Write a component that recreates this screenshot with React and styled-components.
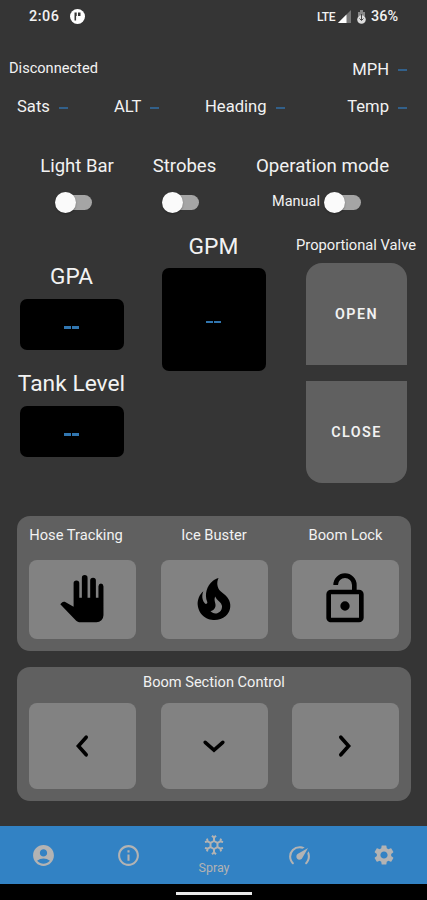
import React, { useState } from "react";
import styled, { createGlobalStyle } from "styled-components";
import { MdAccountCircle, MdInfoOutline, MdSettings } from "react-icons/md";

const GlobalStyle = createGlobalStyle`
  * {
    box-sizing: border-box;
  }
  body {
    margin: 0;
    background: #000;
    font-family: Roboto, sans-serif;
    color: #f2f2f2;
  }
  button {
    font-family: inherit;
    color: inherit;
    border: 0;
    padding: 0;
    cursor: pointer;
  }
`;

const Screen = styled.div`
  width: 427px;
  height: 900px;
  background: #353535;
  display: flex;
  flex-direction: column;
  overflow: hidden;
`;

const StatusBar = styled.header`
  height: 33px;
  padding: 0 29px;
  display: flex;
  justify-content: space-between;
  align-items: center;
  flex-shrink: 0;
`;

const StatusGroup = styled.div`
  display: flex;
  align-items: center;
  gap: ${({ gap }) => gap};
`;

const Text = styled.span`
  font-size: ${({ size }) => size}px;
  font-weight: ${({ weight }) => weight || 400};
  letter-spacing: ${({ spacing }) => spacing || 0}px;
  line-height: 20px;
  white-space: nowrap;
`;

const ConnectionRow = styled.div`
  height: 36px;
  margin-top: 17px;
  padding: 0 20px 0 9px;
  display: flex;
  justify-content: space-between;
  align-items: center;
`;

const ReadingsRow = styled.div`
  height: 36px;
  margin-top: 3px;
  padding: 0 20px 0 17px;
  display: grid;
  grid-template-columns: 97px 91px 1fr auto;
  align-items: center;
`;

const Reading = styled.div`
  display: flex;
  align-items: center;
  gap: 9px;
  padding-top: ${({ drop }) => drop || 0}px;
`;

const Dash = styled.i`
  width: 9px;
  height: 2px;
  margin-top: ${({ low }) => (low ? 2 : 0)}px;
  background: #32608a;
`;

const SwitchRow = styled.div`
  height: 77px;
  margin-top: 31px;
  padding: 0 22px;
  display: grid;
  grid-template-columns: 110px 104px 1fr;
`;

const SwitchGroup = styled.div`
  display: flex;
  flex-direction: column;
  align-items: center;
  gap: 15px;
  padding-left: ${({ shift }) => shift || 0}px;
`;

const SwitchLine = styled.div`
  height: 22px;
  display: flex;
  align-items: center;
  gap: 4px;
  margin-left: ${({ shift }) => shift}px;
`;

const Track = styled.button`
  width: 34px;
  height: 15px;
  margin-left: 3px;
  border-radius: 8px;
  background: #a5a5a5;
  display: flex;
  align-items: center;
  justify-content: ${({ $on }) => ($on ? "flex-end" : "flex-start")};
`;

const Thumb = styled.span`
  width: 21px;
  height: 21px;
  flex-shrink: 0;
  border-radius: 50%;
  background: #fafafa;
  margin: 0 -3px;
  box-shadow: 0 1px 2px rgba(0, 0, 0, 0.3);
`;

const Gauges = styled.main`
  height: 283px;
  padding-left: 16px;
  display: grid;
  grid-template-columns: 111px 173px 112px;
  flex-shrink: 0;
`;

const GaugeColumn = styled.div`
  display: flex;
  flex-direction: column;
  align-items: center;
  padding-top: ${({ top }) => top}px;
`;

const GaugeTitle = styled.h2`
  margin: 0;
  height: ${({ height }) => height}px;
  font-size: ${({ size }) => size}px;
  font-weight: 400;
  line-height: 27px;
  white-space: nowrap;
`;

const GaugeBox = styled.div`
  width: 104px;
  height: ${({ height }) => height}px;
  margin-bottom: ${({ gap }) => gap || 0}px;
  border-radius: 7px;
  background: #000;
  display: flex;
  align-items: center;
  justify-content: center;
  gap: 1px;
  padding-top: 5px;
`;

const GaugeDash = styled.i`
  width: 7px;
  height: ${({ height }) => height}px;
  background: #3176b0;
`;

const ValveTitle = styled.div`
  font-size: 14.7px;
  line-height: 20px;
  height: 28px;
  white-space: nowrap;
`;

const ValveButton = styled.button`
  width: 101px;
  height: 102px;
  flex-shrink: 0;
  margin-bottom: 16px;
  padding-left: 1px;
  background: #606060;
  border-radius: ${({ $end }) => ($end ? "0 0 16px 16px" : "16px 16px 0 0")};
  font-size: 14.3px;
  font-weight: 600;
  letter-spacing: 1.4px;
`;

const Panel = styled.section`
  height: ${({ height }) => height}px;
  margin: 0 16px 16px 17px;
  padding: ${({ top }) => top}px 12px 0;
  border-radius: 13px;
  background: #606060;
  flex-shrink: 0;
`;

const PanelTitle = styled.div`
  height: 31px;
  font-size: 14.6px;
  line-height: 20px;
  text-align: center;
  white-space: nowrap;
`;

const PadRow = styled.div`
  display: grid;
  grid-template-columns: repeat(3, 107px);
  justify-content: space-between;
`;

const PadLabel = styled.div`
  height: 35px;
  font-size: 14.7px;
  line-height: 20px;
  text-align: center;
  white-space: nowrap;
  margin-left: ${({ shift }) => shift || 0}px;
`;

const Pad = styled.button`
  width: 107px;
  height: ${({ height }) => height}px;
  border-radius: 8px;
  background: #828282;
  color: #000;
  display: flex;
  align-items: center;
  justify-content: center;
  padding: 0 1px 1px 0;
`;

const TabBar = styled.nav`
  height: 58px;
  margin-top: auto;
  padding-left: 1px;
  background: #3282c4;
  display: grid;
  grid-template-columns: repeat(5, 1fr);
  flex-shrink: 0;
`;

const Tab = styled.button`
  background: none;
  color: #b3b3b3;
  display: flex;
  flex-direction: column;
  align-items: center;
  justify-content: center;
  font-size: 12.5px;
  line-height: 18px;
  gap: 2px;
`;

const HomeBar = styled.footer`
  height: 16px;
  background: #000;
  display: flex;
  align-items: center;
  justify-content: center;
  flex-shrink: 0;
`;

const HomeHandle = styled.div`
  width: 76px;
  height: 3px;
  margin-top: 2px;
  background: #e8e8e8;
`;

const icons = {
  hand:
    "M21.2 19a3 3 0 0 1-3 3h-6.9c-.8 0-1.4-.3-1.9-.8L2.7 14.3l.5-.6c.5-.5 1.200-.6 1.800-.3l3.400 1.900V5.300a1.220 1.220 0 0 1 2.440 0V11.500h1.100V2.950a1.220 1.220 0 0 1 2.440 0V11.500h1.130V4.100a1.220 1.220 0 0 1 2.440 0V11.500h1.100V6.500a1.080 1.220 0 0 1 2.150 0z",
  fire:
    "M17.66 11.2C17.43 10.9 17.15 10.64 16.89 10.38C16.22 9.78 15.46 9.35 14.82 8.72C13.33 7.26 13 4.85 13.95 3C13 3.23 12.17 3.75 11.46 4.32C8.87 6.4 7.85 10.07 9.07 13.22C9.11 13.32 9.15 13.42 9.15 13.55C9.15 13.77 9 13.97 8.8 14.05C8.57 14.15 8.33 14.09 8.14 13.93C8.08 13.88 8.04 13.83 8 13.76C6.87 12.33 6.69 10.28 7.45 8.64C5.78 10 4.87 12.3 5 14.47C5.06 14.97 5.12 15.47 5.29 15.97C5.43 16.57 5.7 17.17 6 17.7C7.08 19.43 8.95 20.67 10.96 20.92C13.1 21.19 15.39 20.8 17.03 19.32C18.86 17.66 19.5 15 18.56 12.72L18.43 12.46C18.22 12 17.66 11.2 17.66 11.2M14.5 17.5C14.22 17.74 13.76 18 13.4 18.1C12.28 18.5 11.16 17.94 10.5 17.28C11.69 17 12.4 16.12 12.61 15.23C12.78 14.43 12.46 13.77 12.33 13C12.21 12.26 12.23 11.63 12.5 10.94C12.69 11.32 12.89 11.7 13.13 12C13.9 13 15.11 13.44 15.37 14.8C15.41 14.94 15.43 15.08 15.43 15.23C15.46 16.05 15.1 16.95 14.5 17.5Z",
  snowflake:
    "M20.79,13.95L18.46,14.57L16.46,13.44V10.56L18.46,9.43L20.79,10.05L21.31,8.12L19.54,7.65L20,5.88L18.07,5.36L17.45,7.69L15.45,8.82L13,7.38V5.12L14.71,3.41L13.29,2L12,3.29L10.71,2L9.29,3.41L11,5.12V7.38L8.5,8.82L6.5,7.69L5.92,5.36L4,5.88L4.47,7.65L2.7,8.12L3.22,10.05L5.55,9.43L7.55,10.56V13.45L5.55,14.58L3.22,13.96L2.7,15.89L4.47,16.36L4,18.12L5.93,18.64L6.55,16.31L8.55,15.18L11,16.62V18.88L9.29,20.59L10.71,22L12,20.71L13.29,22L14.7,20.59L13,18.88V16.62L15.5,15.17L17.5,16.3L18.12,18.63L20,18.12L19.53,16.35L21.3,15.88L20.79,13.95M9.5,10.56L12,9.11L14.5,10.56V13.44L12,14.89L9.5,13.44V10.56Z",
  speedometer:
    "M12,16A3,3 0 0,1 9,13C9,11.88 9.61,10.9 10.5,10.39L20.21,4.77L14.68,14.35C14.18,15.33 13.17,16 12,16M12,3C13.81,3 15.5,3.5 16.97,4.32L14.87,5.53C14,5.19 13,5 12,5A8,8 0 0,0 4,13C4,15.21 4.89,17.21 6.34,18.65H6.35C6.74,19.04 6.74,19.67 6.35,20.06C5.96,20.45 5.32,20.45 4.93,20.07C3.12,18.26 2,15.76 2,13A10,10 0 0,1 12,3M22,13C22,15.76 20.88,18.26 19.07,20.07C18.68,20.45 18.05,20.45 17.66,20.06C17.27,19.67 17.27,19.04 17.66,18.65C19.11,17.2 20,15.21 20,13C20,12 19.81,11 19.46,10.1L20.67,8C21.5,9.5 22,11.18 22,13Z",
  lockOpen:
    "M18,20V10H6V20H18M18,8A2,2 0 0,1 20,10V20A2,2 0 0,1 18,22H6C4.89,22 4,21.1 4,20V10A2,2 0 0,1 6,8H15V6A3,3 0 0,0 12,3A3,3 0 0,0 9,6H7A5,5 0 0,1 12,1A5,5 0 0,1 17,6V8H18M12,17A2,2 0 0,1 10,15A2,2 0 0,1 12,13A2,2 0 0,1 14,15A2,2 0 0,1 12,17Z",
};

const Icon = ({ name, size }) => (
  <svg width={size} height={size} viewBox="0 0 24 24" fill="currentColor">
    <path d={icons[name]} />
  </svg>
);

const Chevron = ({ points }) => (
  <svg width="24" height="24" viewBox="0 0 24 24" fill="none">
    <polyline
      points={points}
      stroke="#000"
      strokeWidth="3.6"
      strokeLinecap="round"
      strokeLinejoin="miter"
    />
  </svg>
);

const Switch = () => {
  const [on, setOn] = useState(false);
  return (
    <Track $on={on} onClick={() => setOn(!on)}>
      <Thumb />
    </Track>
  );
};

const Gauge = ({ height, gap, dash }) => (
  <GaugeBox height={height} gap={gap}>
    <GaugeDash height={dash} />
    <GaugeDash height={dash} />
  </GaugeBox>
);

function App() {
  const readings = ["Sats", "ALT", "Heading", "Temp"];
  const pads = [
    { label: "Hose Tracking", icon: "hand", shift: -13 },
    { label: "Ice Buster", icon: "fire" },
    { label: "Boom Lock", icon: "lockOpen" },
  ];
  const chevrons = [
    "16.2,3.2 8.4,12 16.2,20.8",
    "3.2,8.300 12,16.1 20.8,8.300",
    "7.8,3.2 15.6,12 7.8,20.8",
  ];
  const tabs = [
    { icon: <MdAccountCircle size={25} /> },
    { icon: <MdInfoOutline size={25} /> },
    { icon: <Icon name="snowflake" size={24} />, label: "Spray" },
    { icon: <Icon name="speedometer" size={25} /> },
    { icon: <MdSettings size={24} /> },
  ];

  return (
    <>
      <GlobalStyle />
      <Screen>
        <StatusBar>
          <StatusGroup gap="11px">
            <Text size={14.4} weight={500} spacing={0.5}>2:06</Text>
            <svg width="15" height="15" viewBox="0 0 15 15">
              <circle cx="7.5" cy="7.5" r="7.5" fill="#fff" />
              <path d="M4.5 3.5h2.2v3.5h-.6v4.5H4.5zM8 3.5h2.5v3.5H8z" fill="#353535" />
            </svg>
          </StatusGroup>
          <StatusGroup gap="3px">
            <Text size={12} weight={500} spacing={-0.4}>LTE</Text>
            <svg width="13" height="13" viewBox="0 0 13 13">
              <path d="M13 0v13H0z" fill="#777" />
              <path d="M8.5 4.5V13H0z" fill="#fff" />
            </svg>
            <svg width="14" height="14" viewBox="0 0 14 14">
              <path d="M4 2h2V0h3v2h2v4H4z" fill="#888" />
              <circle cx="7.5" cy="9.5" r="4.3" fill="#ddd" />
              <path d="M7.5 4v6M5.5 8.5l2 2 2-2" fill="none" stroke="#444" />
            </svg>
            <Text size={14.4} weight={500}>36%</Text>
          </StatusGroup>
        </StatusBar>

        <ConnectionRow>
          <Text size={14.6}>Disconnected</Text>
          <Reading drop={4}>
            <Text size={16.6}>MPH</Text>
            <Dash />
          </Reading>
        </ConnectionRow>
        <ReadingsRow>
          {readings.map((item) => (
            <Reading key={item}>
              <Text size={16.6}>{item}</Text>
              <Dash low />
            </Reading>
          ))}
        </ReadingsRow>

        <SwitchRow>
          <SwitchGroup>
            <Text size={18.5}>Light Bar</Text>
            <SwitchLine shift={-8}><Switch /></SwitchLine>
          </SwitchGroup>
          <SwitchGroup shift={1}>
            <Text size={18.5}>Strobes</Text>
            <SwitchLine shift={-8}><Switch /></SwitchLine>
          </SwitchGroup>
          <SwitchGroup shift={4}>
            <Text size={18.7}>Operation mode</Text>
            <SwitchLine shift={-12}>
              <Text size={14.5}>Manual</Text>
              <Switch />
            </SwitchLine>
          </SwitchGroup>
        </SwitchRow>

        <Gauges>
          <GaugeColumn top={30}>
            <GaugeTitle size={22.6} height={36}>GPA</GaugeTitle>
            <Gauge height={51} gap={20} dash={3} />
            <GaugeTitle size={22.8} height={36}>Tank Level</GaugeTitle>
            <Gauge height={51} dash={3} />
          </GaugeColumn>
          <GaugeColumn top={0}>
            <GaugeTitle size={22.8} height={35}>GPM</GaugeTitle>
            <Gauge height={103} dash={2} />
          </GaugeColumn>
          <GaugeColumn top={2}>
            <ValveTitle>Proportional Valve</ValveTitle>
            <ValveButton>OPEN</ValveButton>
            <ValveButton $end>CLOSE</ValveButton>
          </GaugeColumn>
        </Gauges>

        <Panel height={135} top={9}>
          <PadRow>
            {pads.map((item) => (
              <div key={item.label}>
                <PadLabel shift={item.shift}>{item.label}</PadLabel>
                <Pad height={79}>
                  <Icon name={item.icon} size={56} />
                </Pad>
              </div>
            ))}
          </PadRow>
        </Panel>
        <Panel height={134} top={5}>
          <PanelTitle>Boom Section Control</PanelTitle>
          <PadRow>
            {chevrons.map((points) => (
              <Pad key={points} height={86}>
                <Chevron points={points} />
              </Pad>
            ))}
          </PadRow>
        </Panel>

        <TabBar>
          {tabs.map((tab, index) => (
            <Tab key={index}>
              {tab.icon}
              {tab.label}
            </Tab>
          ))}
        </TabBar>
        <HomeBar>
          <HomeHandle />
        </HomeBar>
      </Screen>
    </>
  );
}

export default App;
